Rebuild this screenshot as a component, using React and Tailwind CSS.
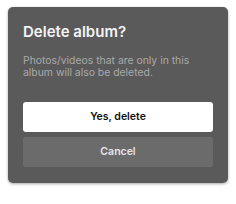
import React from "react";

const App = () => {
  return (
    <div
      className="w-[236px] h-[204px] bg-white pt-[7px] pl-[8px]"
      style={{ fontFamily: "Inter, 'Noto Sans', sans-serif" }}
    >
      <div className="w-[220px] h-[176px] rounded-[5px] bg-[#5a5a5a] shadow-[0_1px_3px_rgba(0,0,0,0.35)] px-[15px] pt-[15px]">
        <h2 className="text-[15px] leading-[20px] font-semibold text-[#f4f4f4]">
          Delete album?
        </h2>
        <p className="mt-[13px] text-[10.4px] leading-[12px] text-[#a9a9a9]">
          Photos/videos that are only in this album will also be deleted.
        </p>
        <div className="mt-[23px] flex flex-col gap-[5px]">
          <button className="h-[30px] w-full rounded-[3px] bg-white text-[10.5px] font-semibold text-[#111]">
            Yes, delete
          </button>
          <button className="h-[30px] w-full rounded-[3px] bg-[#6b6b6b] text-[10.5px] font-semibold text-[#e6e6e6]">
            Cancel
          </button>
        </div>
      </div>
    </div>
  );
};

export default App;
